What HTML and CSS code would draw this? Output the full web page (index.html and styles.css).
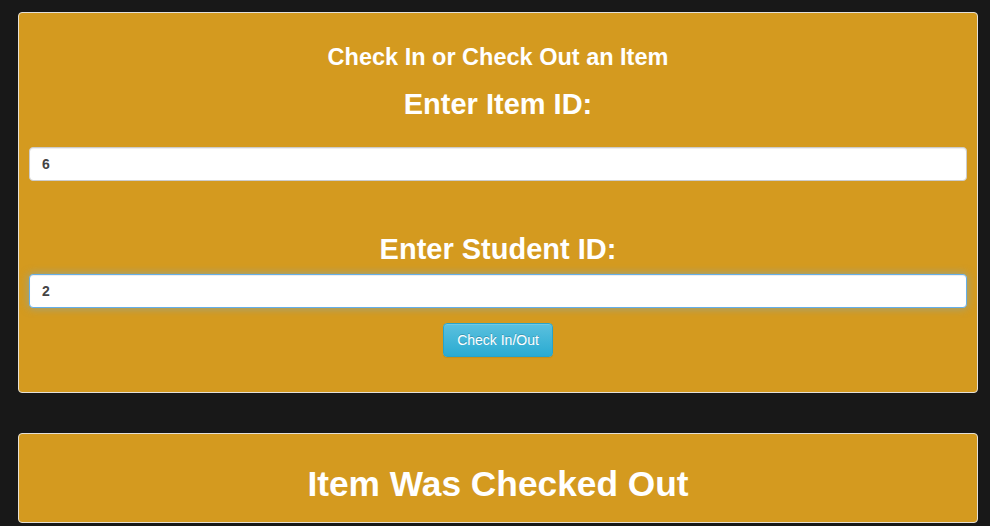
FILE: index.html
```html
<!DOCTYPE html>
<html>
<head>
<meta charset="utf-8">
<link rel="stylesheet" href="styles.css">
</head>
<body>
<div class="page">
  <div class="card card-form">
    <h3 class="title">Check In or Check Out an Item</h3>
    <h2 class="label label-item">Enter Item ID:</h2>
    <input class="field field-item" type="text" value="6">
    <h2 class="label label-student">Enter Student ID:</h2>
    <input class="field field-focus" type="text" value="2">
    <div class="actions"><button class="btn">Check In/Out</button></div>
  </div>
  <div class="card card-result">
    <h1 class="result">Item Was Checked Out</h1>
  </div>
</div>
</body>
</html>
```

FILE: styles.css
```css
html, body {
  margin: 0;
  padding: 0;
  background: #181818;
  font-family: "Liberation Sans", Arial, sans-serif;
  height: 100%;
  overflow: hidden;
}
.page {
  padding: 12px 12px 0 18px;
  display: flex;
  flex-direction: column;
  gap: 40px;
}
.card {
  width: 958px;
  background: #d49a1f;
  border: 1px solid #e4e0d8;
  border-radius: 4px;
  box-sizing: content-box;
}
.card-form {
  padding: 0 10px 35px 10px;
  width: 938px;
  display: flex;
  flex-direction: column;
}
.title {
  margin: 32px 0 0;
  font-size: 23.5px;
  line-height: 25.3px;
  font-weight: bold;
  color: #fff;
  text-align: center;
}
.label {
  margin: 0;
  font-size: 29px;
  line-height: 32px;
  font-weight: bold;
  color: #fff;
  text-align: center;
}
.label-item { margin-top: 18px; }
.label-student { margin-top: 52px; }
.field {
  display: block;
  box-sizing: border-box;
  width: 100%;
  height: 34px;
  padding: 6px 12px;
  border: 1px solid #ccc;
  border-radius: 4px;
  background: #fff;
  box-shadow: inset 0 1px 1px rgba(0,0,0,.075);
  font-family: "Liberation Sans", Arial, sans-serif;
  font-size: 14px;
  font-weight: bold;
  color: #444;
  outline: none;
}
.field-item { margin-top: 27px; }
.field-focus {
  margin-top: 9px;
  border-color: #66afe9;
  box-shadow: inset 0 1px 1px rgba(0,0,0,.075), 0 0 8px rgba(102,175,233,.6);
}
.actions {
  display: flex;
  justify-content: center;
  margin-top: 15px;
}
.btn {
  height: 34px;
  padding: 6px 13px;
  border: 1px solid #28a4c9;
  border-radius: 4px;
  background-image: linear-gradient(to bottom, #5bc0de 0, #2aabd2 100%);
  color: #fff;
  font-family: "Liberation Sans", Arial, sans-serif;
  font-size: 14px;
  line-height: 20px;
  text-shadow: 0 -1px 0 rgba(0,0,0,.2);
  box-shadow: inset 0 1px 0 rgba(255,255,255,.15), 0 1px 1px rgba(0,0,0,.075);
  cursor: pointer;
}
.card-result {
  height: 88px;
}
.result {
  margin: 31px 0 0;
  font-size: 35.3px;
  line-height: 38.5px;
  font-weight: bold;
  color: #fff;
  text-align: center;
}
```
